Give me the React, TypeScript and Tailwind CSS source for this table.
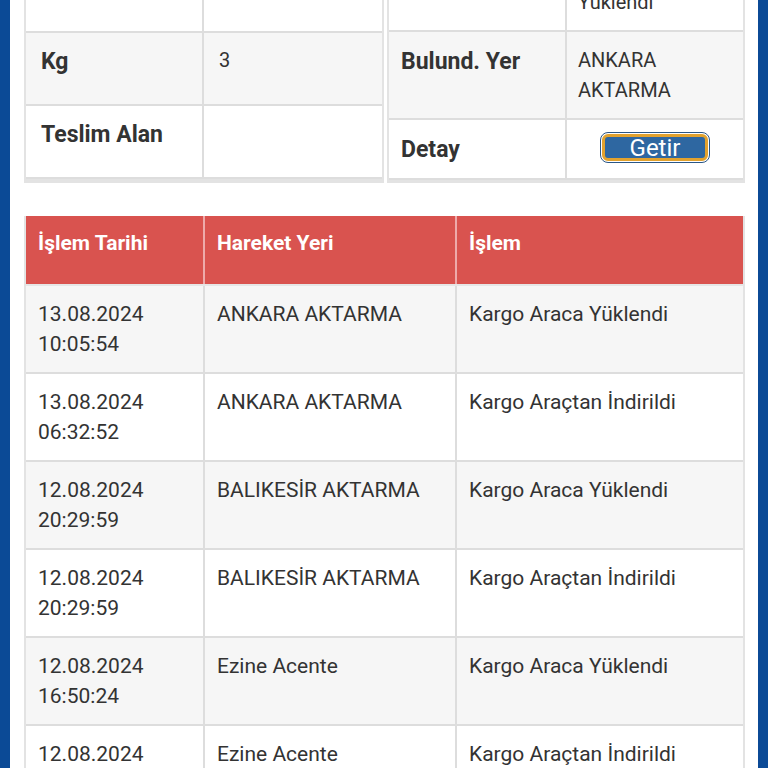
import React from 'react';

type Move = {
  date: string;
  time: string;
  place: string;
  action: string;
};

const moves: Move[] = [
  { date: '13.08.2024', time: '10:05:54', place: 'ANKARA AKTARMA', action: 'Kargo Araca Yüklendi' },
  { date: '13.08.2024', time: '06:32:52', place: 'ANKARA AKTARMA', action: 'Kargo Araçtan İndirildi' },
  { date: '12.08.2024', time: '20:29:59', place: 'BALIKESİR AKTARMA', action: 'Kargo Araca Yüklendi' },
  { date: '12.08.2024', time: '20:29:59', place: 'BALIKESİR AKTARMA', action: 'Kargo Araçtan İndirildi' },
  { date: '12.08.2024', time: '16:50:24', place: 'Ezine Acente', action: 'Kargo Araca Yüklendi' },
  { date: '12.08.2024', time: '16:12:07', place: 'Ezine Acente', action: 'Kargo Araçtan İndirildi' },
];

const font = { fontFamily: 'Roboto, "Noto Sans", sans-serif' };

const GetirButton = () => (
  <button
    type="button"
    className="rounded-[8px] border border-[#2a5686] bg-white p-px"
  >
    <span className="flex h-[27px] w-[106px] items-center justify-center rounded-[6px] border-[3px] border-[#e2a22e] bg-[#2e67a1] text-[24px] leading-none text-white">
      Getir
    </span>
  </button>
);

export default function App() {
  return (
    <div className="flex h-[768px] w-[768px] overflow-hidden bg-white text-[#333]" style={font}>
      <div className="w-[10px] shrink-0 bg-[#0b4a96]" />

      <div className="flex-1 pl-[14px] pr-[13px]">
        {/* summary tables, scrolled so their first row is partly hidden */}
        <div className="-mt-[56px] flex items-end gap-[3px]">
          <div className="w-[360px] border-x-2 border-b-[4px] border-[#e3e3e3]">
            <div className="grid h-[73px] grid-cols-[178px_1fr] border-b-2 border-[#ddd]">
              <div className="border-r-2 border-[#ddd] px-[15px] pt-[14px] text-[23px] font-bold leading-[30px]">Alıcı</div>
              <div className="px-[15px] pt-[12px] text-[20px] leading-[30px]"></div>
            </div>
            <div className="grid h-[73px] grid-cols-[178px_1fr] border-b-2 border-[#ddd] bg-[#f6f6f6]">
              <div className="border-r-2 border-[#ddd] px-[15px] pt-[14px] text-[23px] font-bold leading-[30px]">Kg</div>
              <div className="px-[15px] pt-[12px] text-[20px] leading-[30px]">3</div>
            </div>
            <div className="grid h-[73px] grid-cols-[178px_1fr] border-b-2 border-[#ddd]">
              <div className="border-r-2 border-[#ddd] px-[15px] pt-[14px] text-[23px] font-bold leading-[30px]">Teslim Alan</div>
              <div className="px-[15px] pt-[12px] text-[20px] leading-[30px]"></div>
            </div>
          </div>

          <div className="w-[358px] border-x-2 border-b-[3px] border-[#e3e3e3]">
            <div className="grid h-[88px] grid-cols-[178px_1fr] border-b-2 border-[#ddd]">
              <div className="border-r-2 border-[#ddd] px-[12px] pt-[15px] text-[23px] font-bold leading-[30px]">Son Durum</div>
              <div className="px-[11px] pt-[13px] text-[20px] leading-[30px]">
                Kargo Araca
                <br />
                Yüklendi
              </div>
            </div>
            <div className="grid h-[88px] grid-cols-[178px_1fr] border-b-2 border-[#ddd] bg-[#f6f6f6]">
              <div className="border-r-2 border-[#ddd] px-[12px] pt-[15px] text-[23px] font-bold leading-[30px]">Bulund. Yer</div>
              <div className="px-[11px] pt-[13px] text-[20px] leading-[30px]">
                ANKARA
                <br />
                AKTARMA
              </div>
            </div>
            <div className="grid h-[60px] grid-cols-[178px_1fr] border-b-2 border-[#ddd]">
              <div className="border-r-2 border-[#ddd] px-[12px] pt-[15px] text-[23px] font-bold leading-[30px]">Detay</div>
              <div className="flex items-start justify-center pt-[12px]">
                <GetirButton />
              </div>
            </div>
          </div>
        </div>

        {/* movement history */}
        <div className="mt-[33px] border-x-2 border-[#e3e3e3]">
          <div className="grid h-[70px] grid-cols-[179px_252px_1fr] border-b-2 border-[#e6e6e6] bg-[#d9534f] text-[21px] font-bold leading-[30px] text-white">
            <div className="border-r-2 border-[#eaa] px-[12px] pt-[12px]">İşlem Tarihi</div>
            <div className="border-r-2 border-[#eaa] px-[12px] pt-[12px]">Hareket Yeri</div>
            <div className="px-[12px] pt-[12px]">İşlem</div>
          </div>
          {moves.map((m, i) => (
            <div
              key={i}
              className={
                'grid h-[88px] grid-cols-[179px_252px_1fr] border-b-2 border-[#ddd] text-[21px] leading-[30px] ' +
                (i % 2 === 0 ? 'bg-[#f6f6f6]' : 'bg-white')
              }
            >
              <div className="border-r-2 border-[#ddd] px-[12px] pt-[13px]">
                {m.date}
                <br />
                {m.time}
              </div>
              <div className="border-r-2 border-[#ddd] px-[12px] pt-[13px]">{m.place}</div>
              <div className="px-[12px] pt-[13px]">{m.action}</div>
            </div>
          ))}
        </div>
      </div>

      <div className="w-[10px] shrink-0 bg-[#0b4a96]" />
    </div>
  );
}
